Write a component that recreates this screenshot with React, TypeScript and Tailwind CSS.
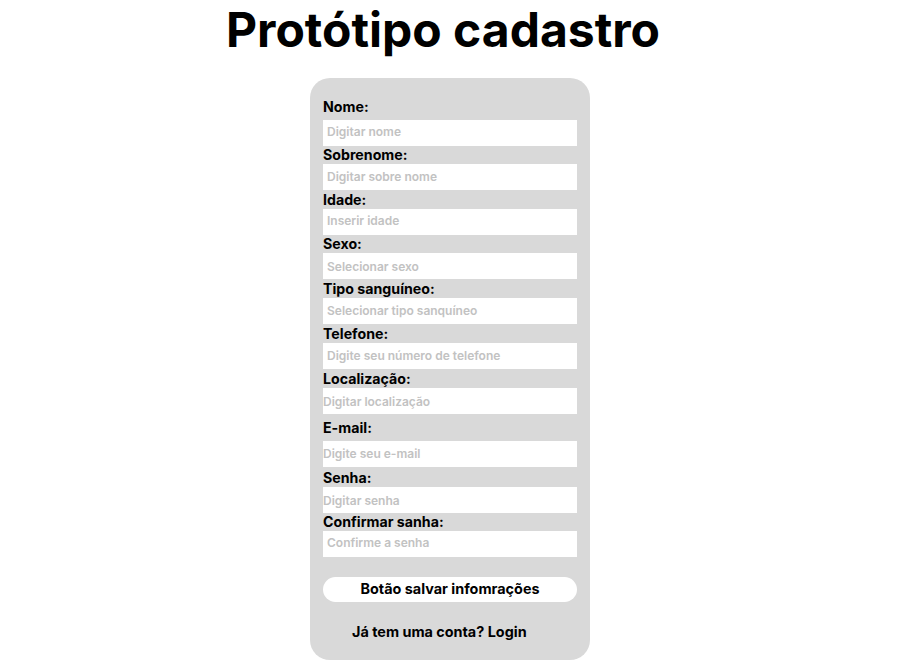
import React from "react";

type Field = { label: string; placeholder: string; block: string; input: string; inputPad: string };

const fields: Field[] = [
  { label: "Nome:", placeholder: "Digitar nome", block: "mt-0", input: "mt-[4px] pb-[3px]", inputPad: "pl-[4px]" },
  { label: "Sobrenome:", placeholder: "Digitar sobre nome", block: "mt-[-1px]", input: "mt-0 pb-[2px]", inputPad: "pl-[4px]" },
  { label: "Idade:", placeholder: "Inserir idade", block: "mt-0", input: "mt-0 pb-[3px]", inputPad: "pl-[4px]" },
  { label: "Sexo:", placeholder: "Selecionar sexo", block: "mt-[-1px]", input: "mt-0 pb-0", inputPad: "pl-[4px]" },
  { label: "Tipo sanguíneo:", placeholder: "Selecionar tipo sanquíneo", block: "mt-0", input: "mt-0 pb-[2px]", inputPad: "pl-[4px]" },
  { label: "Telefone:", placeholder: "Digite seu número de telefone", block: "mt-0", input: "mt-0 pb-[2px]", inputPad: "pl-[4px]" },
  { label: "Localização:", placeholder: "Digitar localização", block: "mt-0", input: "mt-0 pb-0", inputPad: "pl-0" },
  { label: "E-mail:", placeholder: "Digite seu e-mail", block: "mt-[4px]", input: "mt-[4px] pb-[1px]", inputPad: "pl-0" },
  { label: "Senha:", placeholder: "Digitar senha", block: "mt-[1px]", input: "mt-0 pb-0", inputPad: "pl-0" },
  { label: "Confirmar sanha:", placeholder: "Confirme a senha", block: "mt-[-1px]", input: "mt-0 pb-[3px]", inputPad: "pl-[4px]" },
];

export default function App() {
  return (
    <div className="min-h-[667px] w-full bg-white font-['Inter','Noto_Sans',sans-serif] text-black">
      <div className="flex w-full justify-center">
        <h1 className="mr-[21px] mt-[1px] text-[48px] font-bold leading-[58px]">Protótipo cadastro</h1>
      </div>
      <div className="mt-[19px] flex w-full justify-center">
        <div className="mr-[7px] flex w-[280px] flex-col rounded-[20px] bg-[#d9d9d9] px-[13px] pb-[18px] pt-[19px]">
          {fields.map((f) => (
            <div key={f.label} className={`flex flex-col ${f.block}`}>
              <div className="h-[19px] text-[14.2px] font-bold leading-[19px]">{f.label}</div>
              <input
                className={`h-[26px] w-full bg-white text-[12px] font-semibold outline-none placeholder:text-[#c2c2c2] ${f.input} ${f.inputPad}`}
                placeholder={f.placeholder}
              />
            </div>
          ))}
          <button className="mt-[20px] h-[25px] w-full rounded-full bg-white pb-[2px] text-[14.4px] font-bold leading-[23px]">
            Botão salvar infomrações
          </button>
          <div className="mt-[20px] pl-[29px] text-[14.4px] font-bold leading-[20px]">Já tem uma conta? Login</div>
        </div>
      </div>
    </div>
  );
}
